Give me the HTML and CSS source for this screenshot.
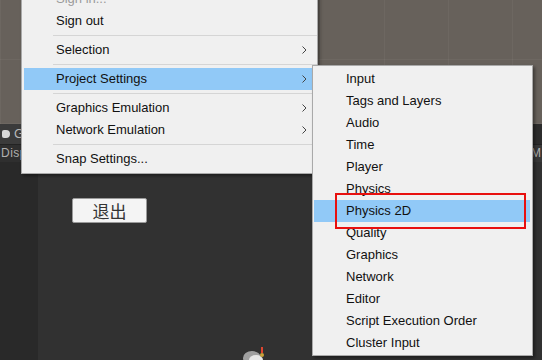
FILE: index.html
```html
<!DOCTYPE html>
<html lang="en">
<head>
    <meta charset="UTF-8">
    <title>Edit menu - Project Settings</title>
    <link rel="stylesheet" href="styles.css">
</head>
<body>

<div class="editor">
    <div class="scene"></div>

    <div class="toolbar">
        <div class="tab"><span class="tab-icon"></span>G</div>
        <div class="toolbar-rest"></div>
    </div>

    <div class="subbar">
        <div class="sub-left">Disp</div>
        <div class="sub-mid"></div>
        <div class="sub-right">M</div>
    </div>

    <div class="game">
        <div class="side"></div>
        <div class="view">
            <button class="quit-btn">退出</button>
            <svg class="sprite" width="40" height="20" viewBox="0 0 40 20">
                <ellipse cx="14" cy="16" rx="9" ry="7" fill="#bdbdbd" opacity="0.8"/>
                <ellipse cx="18" cy="18" rx="7" ry="5" fill="#e8e8e8"/>
                <rect x="23" y="5" width="2" height="6" fill="#e0452f"/>
                <circle cx="24" cy="13" r="2" fill="#c9a23a"/>
            </svg>
        </div>
    </div>
</div>

<!-- Edit menu -->
<div class="menu main-menu">
    <div class="row disabled">Sign in...</div>
    <div class="row">Sign out</div>
    <div class="sep"></div>
    <div class="row">Selection <span class="arrow"><svg width="5" height="8" viewBox="0 0 5 8"><polyline points="0.5,0.5 4,4 0.5,7.5" fill="none" stroke="#444" stroke-width="1"/></svg></span></div>
    <div class="sep"></div>
    <div class="row active">Project Settings <span class="arrow"><svg width="5" height="8" viewBox="0 0 5 8"><polyline points="0.5,0.5 4,4 0.5,7.5" fill="none" stroke="#444" stroke-width="1"/></svg></span></div>
    <div class="sep"></div>
    <div class="row">Graphics Emulation <span class="arrow"><svg width="5" height="8" viewBox="0 0 5 8"><polyline points="0.5,0.5 4,4 0.5,7.5" fill="none" stroke="#444" stroke-width="1"/></svg></span></div>
    <div class="row">Network Emulation <span class="arrow"><svg width="5" height="8" viewBox="0 0 5 8"><polyline points="0.5,0.5 4,4 0.5,7.5" fill="none" stroke="#444" stroke-width="1"/></svg></span></div>
    <div class="sep"></div>
    <div class="row">Snap Settings...</div>
</div>

<!-- Project Settings submenu -->
<div class="menu sub-menu">
    <div class="row">Input</div>
    <div class="row">Tags and Layers</div>
    <div class="row">Audio</div>
    <div class="row">Time</div>
    <div class="row">Player</div>
    <div class="row">Physics</div>
    <div class="row active">Physics 2D</div>
    <div class="row">Quality</div>
    <div class="row">Graphics</div>
    <div class="row">Network</div>
    <div class="row">Editor</div>
    <div class="row">Script Execution Order</div>
    <div class="row">Cluster Input</div>
</div>

<div class="mark"></div>

</body>
</html>
```

FILE: styles.css
```css
body {
    margin: 0;
    width: 542px;
    height: 360px;
    overflow: hidden;
    position: relative;
    font-family: 'Liberation Sans', Arial, sans-serif;
    font-size: 13px;
    background-color: #313131;
}
.editor {
    display: flex;
    flex-direction: column;
    height: 360px;
}
.scene {
    height: 124px;
    background-color: #67615b;
    background-image:
        repeating-linear-gradient(90deg, rgba(255,255,255,0.04) 0 1px, transparent 1px 64px),
        repeating-linear-gradient(0deg, rgba(255,255,255,0.04) 0 1px, transparent 1px 64px);
}
.toolbar {
    height: 20px;
    display: flex;
    border-bottom: 1px solid #232323;
}
.tab {
    width: 60px;
    background-color: #3b3b3b;
    color: #b8b8b8;
    font-size: 13px;
    line-height: 20px;
    display: flex;
    align-items: center;
    gap: 4px;
    padding-left: 2px;
}
.tab-icon {
    width: 8px;
    height: 8px;
    background-color: #d8d8d8;
    border-radius: 2px 4px 4px 2px;
}
.toolbar-rest {
    flex: 1;
    background-color: #2c2c2c;
}
.subbar {
    height: 17px;
    display: flex;
    color: #b0b0b0;
    font-size: 12px;
    line-height: 17px;
}
.sub-left {
    width: 60px;
    background-color: #2f2f2f;
    padding-left: 1px;
    letter-spacing: 0.5px;
}
.sub-mid {
    flex: 1;
    background-color: #383838;
}
.sub-right {
    width: 11px;
    background-color: #383838;
    border-left: 1px solid #252525;
    padding-left: 1px;
}
.game {
    flex: 1;
    display: flex;
}
.side {
    width: 38px;
    background-color: #292929;
}
.view {
    flex: 1;
    background-color: #313131;
    position: relative;
}
.quit-btn {
    display: block;
    margin: 36px 0 0 34px;
    width: 75px;
    height: 25px;
    padding: 0;
    background-color: #f4f4f4;
    border: 1px solid #9a9a9a;
    border-radius: 2px;
    color: #333;
    font-family: 'Noto Sans CJK SC', sans-serif;
    font-size: 17px;
    line-height: 22px;
}
.sprite {
    position: absolute;
    left: 200px;
    top: 180px;
}
.menu {
    position: absolute;
    background-color: #f0f0f0;
    border: 1px solid #a9a9a9;
    box-shadow: 2px 2px 3px rgba(0, 0, 0, 0.4);
    color: #111;
}
.main-menu {
    left: 21px;
    top: -16px;
    width: 293px;
    padding: 3px 0 3px 2px;
}
.sub-menu {
    left: 312px;
    top: 65px;
    width: 216px;
    padding: 2px 2px 1px 1px;
    z-index: 2;
}
.row {
    height: 22px;
    line-height: 22px;
    padding-left: 32px;
    position: relative;
    white-space: nowrap;
}
.row.active {
    background-color: #91c9f7;
}
.row.disabled {
    color: #9a9a9a;
}
.arrow {
    position: absolute;
    right: 10px;
    top: 7px;
    line-height: 0;
}
.sep {
    height: 0;
    margin: 3px 0 3px 29px;
    border-top: 1px solid #d5d5d5;
}
.mark {
    position: absolute;
    left: 335px;
    top: 193px;
    width: 191px;
    height: 36px;
    box-sizing: border-box;
    border: 2px solid #e8100f;
    z-index: 3;
}
```
